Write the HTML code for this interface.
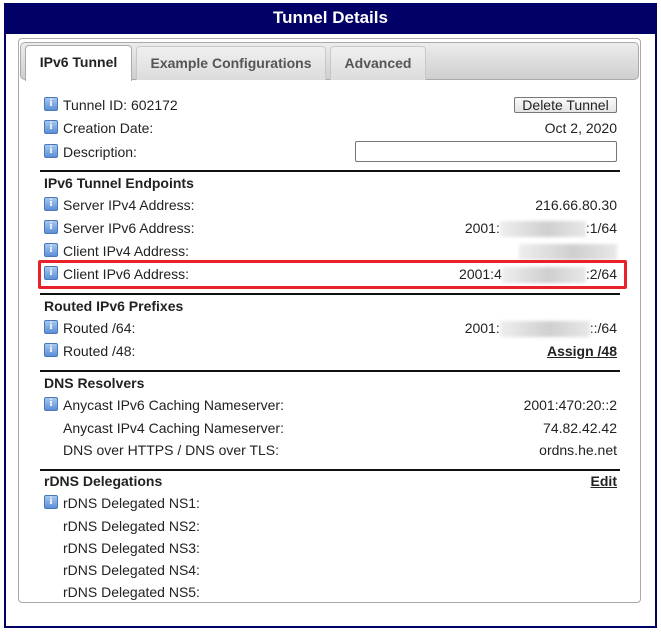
<!DOCTYPE html>
<html><head><meta charset="utf-8"><style>
*{margin:0;padding:0;box-sizing:border-box}
body{width:661px;height:633px;background:#fff;font-family:"Liberation Sans",Arial,sans-serif;font-size:14px;color:#222;position:relative;overflow:hidden}
.frame{position:absolute;left:4px;top:3px;width:653px;height:625px;border:2px solid #000066}
.hdr{position:absolute;left:4px;top:3px;width:653px;height:31px;background:#000066;color:#fff;font-weight:bold;font-size:17px;text-align:center;line-height:29px}
.panel{position:absolute;left:18px;top:38px;width:623px;height:565px;border:1px solid #aaa;border-radius:4px;background:#fff}
.tabbar{position:absolute;left:20px;top:42px;width:619px;height:38px;border:1px solid #aaa;border-radius:5px;background:linear-gradient(#ececec,#cfcfcf)}
.tab{position:absolute;top:46px;height:34px;border:1px solid #c8c8c8;border-bottom:none;border-radius:4px 4px 0 0;background:linear-gradient(#f0f0f0,#dcdcdc);font-weight:bold;color:#555;text-align:center;line-height:33px;font-size:14px}
.tab.act{background:#fff;color:#222;border-color:#aaa;top:45px;height:36px}
.r{position:absolute;left:44px;width:573px;height:20px;line-height:20px}
.r .l{position:absolute;left:19px;top:0;white-space:nowrap}
.r .v{position:absolute;right:0;top:0;white-space:nowrap}
.i{position:absolute;left:0;top:2px;width:14px;height:14px;background:linear-gradient(#a8c8ee,#5a8fd6);border:1px solid #4a78b8;border-radius:2px;color:#fff;font-size:10px;font-weight:bold;line-height:12px;text-align:center;font-family:"Liberation Serif",serif}
.h{position:absolute;left:44px;font-weight:bold;height:20px;line-height:20px}
.hr{position:absolute;left:40px;width:580px;height:0;border-top:2px solid #111}
.blur{display:inline-block;vertical-align:middle;height:16px;background:linear-gradient(90deg,#eee,#d8d8d8 40%,#cfcfcf 55%,#e8e8e8);filter:blur(1.5px)}
a{color:#222;font-weight:bold;text-decoration:underline}
.btn{position:absolute;right:0;top:2px;width:103px;height:16px;border:1px solid #777;border-radius:2px;background:linear-gradient(#fafafa,#e4e4e4);font-size:14px;line-height:14px;text-align:center;overflow:hidden}
.inp{position:absolute;right:0;top:-1px;width:262px;height:21px;border:1px solid #777;border-radius:2px;background:#fff}
.red{position:absolute;left:38px;top:260px;width:589px;height:29px;border:3px solid #e8212b;border-radius:2px}
</style></head><body>
<div class="frame"></div>
<div class="hdr">Tunnel Details</div>
<div class="panel"></div>
<div class="tabbar"></div>
<div class="tab act" style="left:25px;width:107px">IPv6 Tunnel</div>
<div class="tab" style="left:136px;width:190px">Example Configurations</div>
<div class="tab" style="left:330px;width:96px">Advanced</div>

<div class="r" style="top:95px"><span class="i">i</span><span class="l">Tunnel ID: 602172</span><span class="btn">Delete Tunnel</span></div>
<div class="r" style="top:118px"><span class="i">i</span><span class="l">Creation Date:</span><span class="v">Oct 2, 2020</span></div>
<div class="r" style="top:142px"><span class="i">i</span><span class="l">Description:</span><span class="inp"></span></div>
<div class="hr" style="top:170px"></div>
<div class="h" style="top:173px">IPv6 Tunnel Endpoints</div>
<div class="r" style="top:195px"><span class="i">i</span><span class="l">Server IPv4 Address:</span><span class="v">216.66.80.30</span></div>
<div class="r" style="top:218px"><span class="i">i</span><span class="l">Server IPv6 Address:</span><span class="v">2001:<span class="blur" style="width:86px"></span>:1/64</span></div>
<div class="r" style="top:241px"><span class="i">i</span><span class="l">Client IPv4 Address:</span><span class="v"><span class="blur" style="width:98px"></span></span></div>
<div class="r" style="top:264px"><span class="i">i</span><span class="l">Client IPv6 Address:</span><span class="v">2001:4<span class="blur" style="width:84px"></span>:2/64</span></div>
<div class="red"></div>
<div class="hr" style="top:293px"></div>
<div class="h" style="top:296px">Routed IPv6 Prefixes</div>
<div class="r" style="top:318px"><span class="i">i</span><span class="l">Routed /64:</span><span class="v">2001:<span class="blur" style="width:90px"></span>::/64</span></div>
<div class="r" style="top:341px"><span class="i">i</span><span class="l">Routed /48:</span><span class="v"><a>Assign /48</a></span></div>
<div class="hr" style="top:370px"></div>
<div class="h" style="top:373px">DNS Resolvers</div>
<div class="r" style="top:395px"><span class="i">i</span><span class="l">Anycast IPv6 Caching Nameserver:</span><span class="v">2001:470:20::2</span></div>
<div class="r" style="top:418px"><span class="l">Anycast IPv4 Caching Nameserver:</span><span class="v">74.82.42.42</span></div>
<div class="r" style="top:440px"><span class="l">DNS over HTTPS / DNS over TLS:</span><span class="v">ordns.he.net</span></div>
<div class="hr" style="top:469px"></div>
<div class="h" style="top:471px">rDNS Delegations</div>
<div class="r" style="top:471px"><span class="v"><a>Edit</a></span></div>
<div class="r" style="top:493px"><span class="i">i</span><span class="l">rDNS Delegated NS1:</span></div>
<div class="r" style="top:516px"><span class="l">rDNS Delegated NS2:</span></div>
<div class="r" style="top:538px"><span class="l">rDNS Delegated NS3:</span></div>
<div class="r" style="top:560px"><span class="l">rDNS Delegated NS4:</span></div>
<div class="r" style="top:582px"><span class="l">rDNS Delegated NS5:</span></div>
</body></html>
